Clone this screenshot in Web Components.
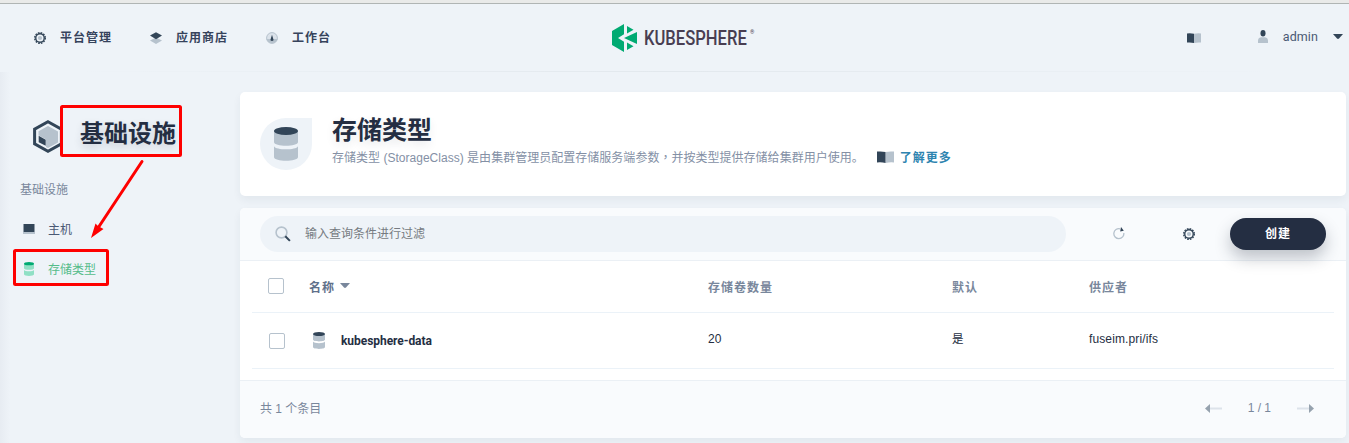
<!DOCTYPE html>
<html lang="zh-CN">
<head>
<meta charset="utf-8">
<title>KubeSphere</title>
<style>
body{margin:0;background:#eef3f8;overflow:hidden;font:12px/20px "Liberation Sans","Noto Sans CJK SC",sans-serif;color:#242e42}
</style>
</head>
<body>
<ks-app></ks-app>
<script>
const DB = `<path fill="var(--b)" d="M0 4v11c0 5 24 5 24 0V4zM0 19.2v10.800c0 5 24 5 24 0V19.2c-2 4.200-22 4.200-24 0z"/><ellipse cx="12" cy="4" rx="12" ry="4" fill="var(--a)"/>`;
const GEAR = `<circle cx="6.500" cy="6.500" r="5.700" fill="none" stroke="var(--a)" stroke-width="1.600" stroke-dasharray="1.790 1.190"/><circle cx="6.500" cy="6.500" r="4.600" fill="none" stroke="var(--a)" stroke-width="1.500"/><circle cx="6.500" cy="6.500" r="2.300" fill="var(--b)"/>`;
const ICONS = {
  gear: ['0 0 13 13', GEAR],
  db: ['0 0 24 34', DB],
  layers: ['0 0 12 12', `<path fill="var(--b)" d="M0 8.500l6-3 6 3-6 3.500z"/><path fill="var(--a)" d="M0 3.600L6 .2l6 3.400L6 7.200z"/>`],
  dash: ['0 0 12 12', `<circle cx="6" cy="6" r="5.400" fill="#dbe2ea" stroke="var(--b)"/><path fill="var(--b)" d="M.5 7h11a5.600 5 0 0 1-11 0z"/><path fill="var(--a)" d="M6 2.700L7.300 7a1.400 1.400 0 1 1-2.600 0z"/>`],
  book: ['0 0 17 12', `<path fill="var(--b)" d="M8.500 1Q13 0 17 .6v10.900q-4-.5-8.500.5z"/><path fill="var(--a)" d="M0 .6Q4.500 0 8.500 1v11Q4.500 11 0 11.500z"/>`],
  user: ['0 0 10 13', `<path fill="var(--b)" d="M0 13v-2.500C0 8 2 7.300 3.200 7.300h3.600C8 7.300 10 8 10 10.500V13z"/><ellipse cx="5" cy="3.300" rx="2.500" ry="3.200" fill="var(--a)"/>`],
  caret: ['0 0 10 5', `<path fill="var(--a)" d="M0 0h10L6 4.500q-1 .8-2 0z"/>`],
  cube: ['0 0 30 33', `<path fill="none" stroke="var(--a)" stroke-width="3" d="M15 1.800l13.400 7.400v14.600L15 31.200 1.600 23.800V9.200z"/><path fill="var(--b)" d="M15 6l10 5.500v11L15 28l-2-1v-7.500L5.500 15.300v-4z"/><path fill="var(--a)" d="M5.700 15.800l7 4v6l-7-3.500z"/>`],
  host: ['0 0 12 10', `<path fill="var(--b)" d="M0 8h12v2H0z"/><path fill="var(--a)" d="M.5 0h11v8H.5z"/>`],
  search: ['0 0 16 16', `<circle cx="6.500" cy="6.500" r="5.400" fill="none" stroke="var(--b)" stroke-width="1.600"/><path stroke="var(--a)" stroke-width="2" d="M10.300 10.300l4.600 4.600"/>`],
  refresh: ['0 0 12 13', `<path fill="none" stroke="var(--b)" stroke-width="1.300" d="M7 1.800A5 5 0 1 0 10.800 6"/><path fill="var(--a)" d="M8 0L10.800 3.800 7.200 4.400z"/>`],
  left: ['0 0 17 9', `<path stroke="#dde3ea" stroke-width="2" d="M5 4.500h12"/><path fill="#96a2ae" d="M0 4.500L5 0v9z"/>`],
  right: ['0 0 17 9', `<path stroke="#dde3ea" stroke-width="2" d="M0 4.500h12"/><path fill="#96a2ae" d="M17 4.500L12 0v9z"/>`]
};
function define(name, html) {
  const t = document.createElement('template');
  t.innerHTML = html;
  customElements.define(name, class extends HTMLElement {
    constructor() { super(); this.attachShadow({mode: 'open'}).append(t.content.cloneNode(true)); }
  });
}
customElements.define('ks-icon', class extends HTMLElement {
  connectedCallback() {
    const root = this.shadowRoot || this.attachShadow({mode: 'open'});
    const [box, body] = ICONS[this.getAttribute('name')];
    root.innerHTML = `<style>:host{display:block;flex:none;--a:var(--icon-dark,#324558);--b:var(--icon-light,#b6c2cd)}svg{display:block}</style>
      <svg width="${this.getAttribute('w')}" height="${this.getAttribute('h')}" viewBox="${box}" preserveAspectRatio="none">${body}</svg>`;
  }
});
define('ks-checkbox', `<style>:host{display:block;box-sizing:border-box;width:16px;height:16px;border:1px solid #b6c2cd;border-radius:2px;background:#fff}</style>`);
define('ks-nav-item', `<style>:host{display:flex;align-items:center;gap:14px;color:#36435c;font-weight:600;letter-spacing:1px}
  ::slotted(ks-icon){margin-top:1px}span{padding-top:1px}</style><slot name="icon"></slot><span><slot></slot></span>`);
define('ks-logo', `<style>:host{display:flex;align-items:flex-start;width:146px}svg{display:block;flex:none}
  .word{width:105px;height:30px;margin-left:6px;font:500 21px/30px Roboto,sans-serif;color:#483e52}
  .word span{display:inline-block;transform-origin:0 50%;transform:scaleX(.79)}
  sup{font:5.500px/8px Roboto,sans-serif;color:#483e52;margin:5px 0 0 1px}</style>
  <svg width="26" height="30" viewBox="0 0 26 30">
  <path fill="#00aa72" d="M12 1v10.300L6 15l6 3.700V29L0 22V8z"/><path fill="#00aa72" d="M15 3l6.500 3.800L15 10.500zM25 9v12l-13-6zM15 19.500l6.500 3.700L15 27z"/></svg>
  <div class="word"><span>KUBESPHERE</span></div><sup>®</sup>`);
define('ks-header', `<style>
  :host{display:grid;grid-template-columns:612px 146px 1fr;box-sizing:border-box;height:72px;border-top:3px solid #e9eae9;
    background:linear-gradient(#b0b5b4,#b0b5b4) 0 0/100% 1px no-repeat,linear-gradient(90deg,transparent 5%,#e2e8ed 50%,transparent 95%) 0 100%/100% 1px no-repeat}
  nav{display:flex;gap:38px;padding:0 0 0 34px;align-items:center}
  .user{display:flex;align-items:center;justify-content:flex-end;padding:0 6px 2px 0;font:12.500px/20px Roboto,sans-serif;letter-spacing:.1px;color:#4a5974}
  .book{margin:2px 57px 0 0}.person{margin-right:15px}.caret{margin-left:15px}
  ks-logo{padding-top:20px}</style>
  <nav><ks-nav-item><ks-icon slot="icon" name="gear" w="12" h="12"></ks-icon>平台管理</ks-nav-item>
  <ks-nav-item><ks-icon slot="icon" name="layers" w="12" h="12"></ks-icon>应用商店</ks-nav-item>
  <ks-nav-item><ks-icon slot="icon" name="dash" w="12" h="12"></ks-icon>工作台</ks-nav-item></nav>
  <ks-logo></ks-logo>
  <div class="user"><ks-icon class="book" name="book" w="14" h="10"></ks-icon><ks-icon class="person" name="user" w="10" h="13"></ks-icon>admin<ks-icon class="caret" name="caret" w="10" h="5"></ks-icon></div>`);
define('ks-side-link', `<style>:host{display:flex;align-items:center;height:40px;gap:13px;padding-left:3px;color:#4a5974}
  :host([active]){color:#55bc8a;--icon-dark:#00aa72;--icon-light:#90e0c5}::slotted(ks-icon){width:12px;display:flex;justify-content:center}span{padding-top:2px}</style><slot name="icon"></slot><span><slot></slot></span>`);
define('ks-sidebar', `<style>:host{display:block;padding:26px 0 0 20px;box-sizing:border-box;background:linear-gradient(90deg,#e7ecf2,transparent 10px)}
  h1{display:flex;align-items:center;margin:0;padding-left:13px;gap:17px;height:70px;font-size:24px;line-height:34px;font-weight:600;text-shadow:0 4px 8px rgba(36,46,66,.16)}
  h1 ks-icon{margin-top:6px}h1 span{padding-top:1px}
  p{margin:12px 0 9px;color:#79879c;line-height:20px}</style>
  <h1><ks-icon name="cube" w="30" h="33"></ks-icon><span>基础设施</span></h1><p>基础设施</p>
  <ks-side-link><ks-icon slot="icon" name="host" w="12" h="10"></ks-icon>主机</ks-side-link>
  <ks-side-link active><ks-icon slot="icon" name="db" w="10" h="14"></ks-icon>存储类型</ks-side-link>`);
define('ks-banner', `<style>:host{display:flex;box-sizing:border-box;height:104px;padding:21px 20px;gap:20px;background:#fff;border-radius:5px;box-shadow:0 4px 8px rgba(36,46,66,.06)}
  .drop{display:flex;align-items:center;justify-content:center;width:52px;height:52px;margin-top:5px;border-radius:50% 0 50% 50%;background:#eef3f8}
  h2{margin:0;font-size:25px;line-height:34px;font-weight:600;text-shadow:0 4px 8px rgba(36,46,66,.1)}
  p{display:flex;align-items:center;margin:0;color:#8490a5}i{font-style:normal;font-family:"Noto Sans CJK TC",sans-serif}
  p span{letter-spacing:.02px}p ks-icon{margin:-2px 6px 0 13px}b{color:#2e84b0;letter-spacing:1px}</style>
  <div class="drop"><ks-icon name="db" w="24" h="34"></ks-icon></div>
  <div><h2>存储类型</h2><p><span>存储类型 (StorageClass) 是由集群管理员配置存储服务端参数<i lang="zh-TW">，</i>并按类型提供存储给集群用户使用。</span><ks-icon name="book" w="17" h="12"></ks-icon><b>了解更多</b></p></div>`);
define('ks-toolbar', `<style>:host{display:flex;align-items:center;box-sizing:border-box;height:53px;padding:0 20px;background:#f9fbfd;border-bottom:1px solid #ebf0f5;border-radius:5px 5px 0 0}
  .search{display:flex;align-items:center;box-sizing:border-box;width:806px;height:36px;padding:0 15px;gap:14px;border-radius:18px;background:#eef3f8;color:#767b81}
  .r{margin-left:47px}.g{margin:0 35px 0 58px}.r,.g{padding-bottom:1px}
  button{width:96px;height:32px;border:0;border-radius:16px;background:#242e42;color:#fff;font:600 12px/20px "Liberation Sans","Noto Sans CJK SC",sans-serif;letter-spacing:1px;padding:0;box-shadow:0 8px 16px rgba(36,46,66,.28)}</style>
  <div class="search"><ks-icon name="search" w="16" h="16"></ks-icon>输入查询条件进行过滤</div>
  <ks-icon class="r" name="refresh" w="12" h="13"></ks-icon><ks-icon class="g" name="gear" w="12" h="12"></ks-icon><button>创建</button>`);
define('ks-row', `<style>:host{display:grid;grid-template-columns:57px 399px 244px 137px 1fr;align-items:center;box-sizing:border-box;height:56px;margin:0 12px;border-bottom:1px solid #ebf2f8}
  :host([head]){height:52px;font-weight:600;letter-spacing:1px;color:#79879c}
  .check{padding-left:var(--check,17px)}:host([head]) .check{padding-bottom:1px}.v{padding-bottom:3px}:host([head]) .v{padding:2px 0 0}</style>
  <div class="check"><ks-checkbox></ks-checkbox></div><slot name="name"></slot><div class="v"><slot name="count"></slot></div><div class="v"><slot name="default"></slot></div><div class="v"><slot name="provider"></slot></div>`);
define('ks-pager', `<style>:host{display:flex;align-items:center;justify-content:space-between;box-sizing:border-box;height:58px;padding:0 32px 3px 20px;background:#f9fbfd;border-top:1px solid #ebf0f5;border-radius:0 0 5px 5px;color:#79879c}
  div{display:flex;align-items:center;gap:26px}ks-icon{margin-top:1px}.total{padding-top:1px}</style><span class="total">共 1 个条目</span>
  <div><ks-icon name="left" w="17" h="9"></ks-icon><span>1 / 1</span><ks-icon name="right" w="17" h="9"></ks-icon></div>`);
define('ks-table', `<style>:host{display:block;background:#fff;border-radius:5px;box-shadow:0 4px 8px rgba(36,46,66,.06)}
  .h{--check:16px}.sort{display:flex;align-items:center;gap:5px;padding-top:2px;color:#5f708a;--icon-dark:#79879c}.sort ks-icon{margin-top:-4px}
  .name{display:flex;align-items:center;gap:16px;padding-left:4px;font:bold 12px/20px Roboto,sans-serif}.name span{letter-spacing:-.05px}
  .lat{letter-spacing:.12px}.cn{font-size:11.500px}
  .body{padding-bottom:11px}</style>
  <ks-toolbar></ks-toolbar><div class="body">
  <ks-row head class="h"><div class="sort" slot="name">名称<ks-icon name="caret" w="10" h="5"></ks-icon></div><span slot="count">存储卷数量</span><span slot="default">默认</span><span slot="provider">供应者</span></ks-row>
  <ks-row><div class="name" slot="name"><ks-icon name="db" w="12" h="17"></ks-icon><span>kubesphere-data</span></div><span slot="count" class="lat">20</span><span slot="default" class="cn">是</span><span slot="provider" class="lat">fuseim.pri/ifs</span></ks-row></div>
  <ks-pager></ks-pager>`);
define('ks-annotation', `<style>:host{position:absolute;left:0;top:0;pointer-events:none}svg{display:block}</style>
  <svg width="240" height="300" fill="none" stroke="#fe0000" stroke-width="3"><rect x="61.500" y="106.500" width="119" height="49" rx="1"/><rect x="14.500" y="250.500" width="93" height="34" rx="1"/>
  <path stroke-linecap="round" d="M142 161.500L98 228"/><path fill="#fe0000" stroke="none" d="M91 238l4.500-14.500 2.500 2.500 5.500 3z"/></svg>`);
define('ks-app', `<style>:host{display:block;position:relative;height:443px;overflow:hidden}
  .main{display:grid;grid-template-columns:240px 1fr}main{display:flex;flex-direction:column;gap:12px;padding:20px 3px 5px 0}</style>
  <ks-header></ks-header><div class="main"><ks-sidebar></ks-sidebar><main><ks-banner></ks-banner><ks-table></ks-table></main></div><ks-annotation></ks-annotation>`);
</script>
</body>
</html>
